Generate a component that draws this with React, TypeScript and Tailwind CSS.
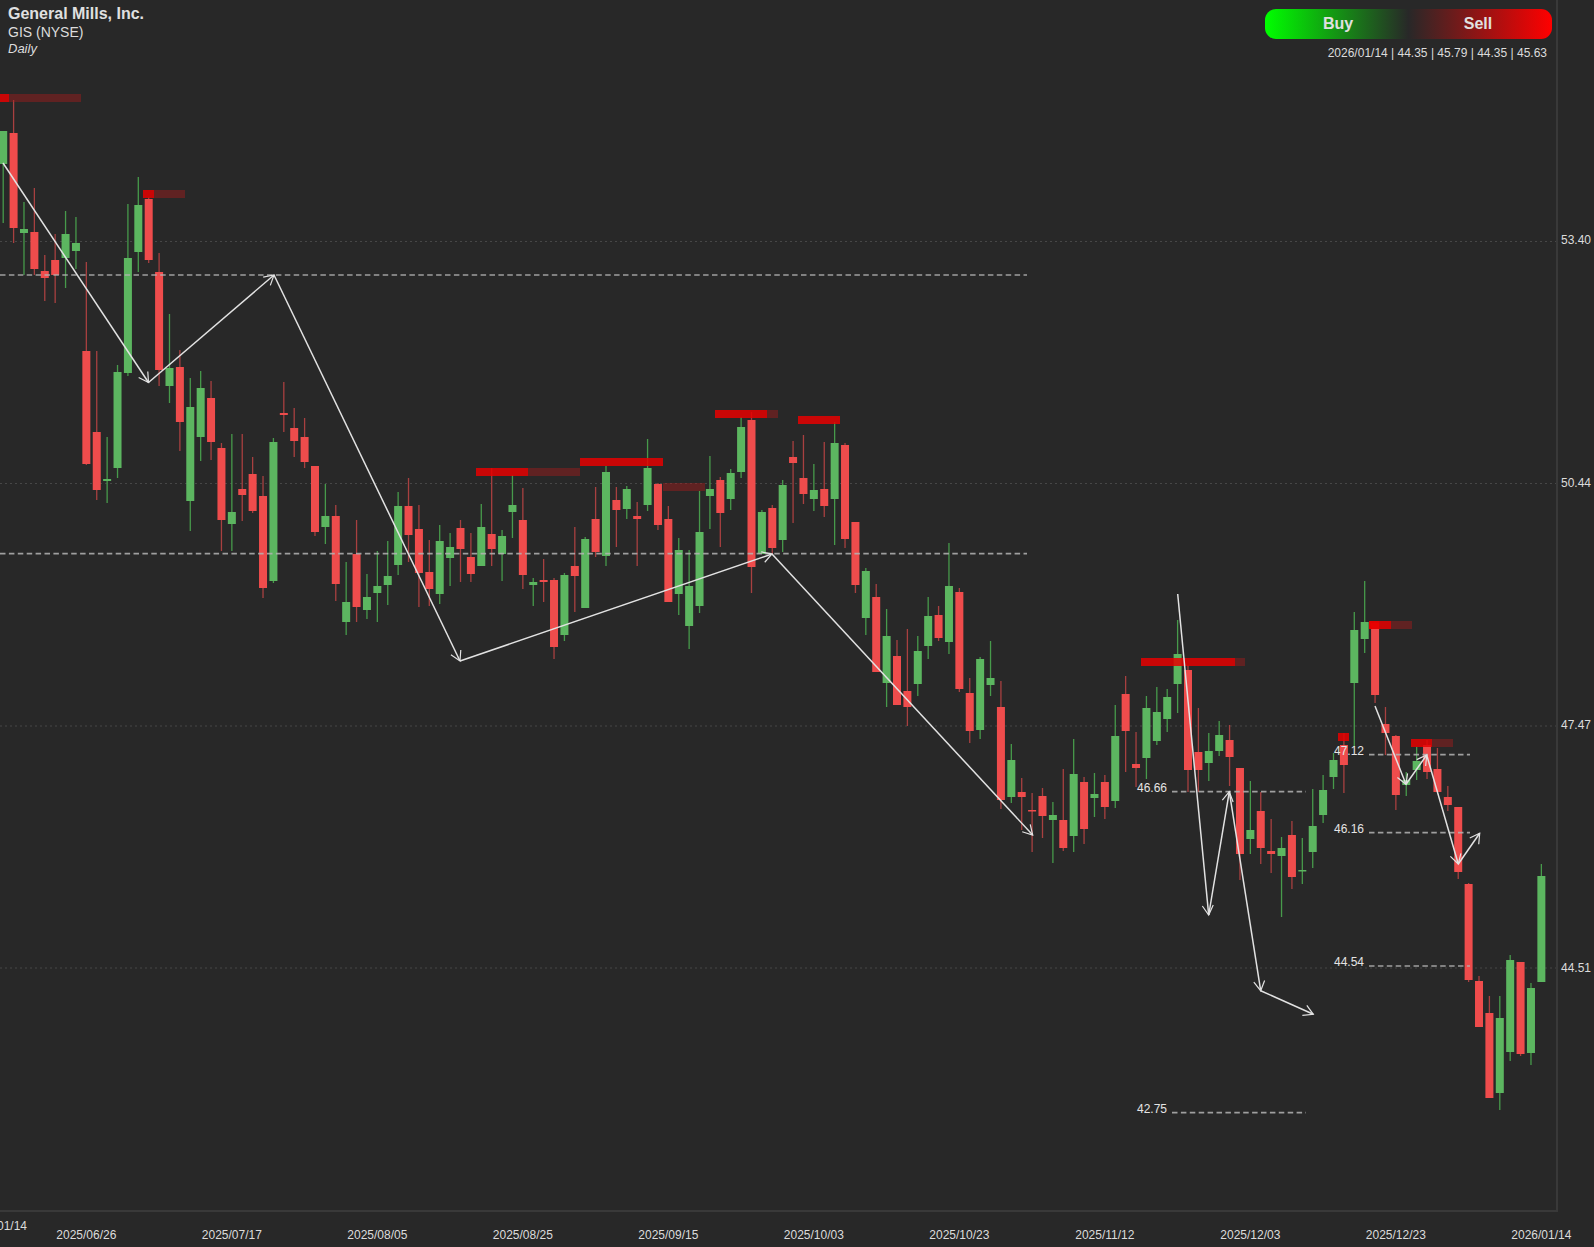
// candle: [up, wick top, body top, body bottom, wick bottom], all in chart pixels
type Candle = [0 | 1, number, number, number, number];

const candles: Candle[] = [
  [1, 131, 131, 164, 223], [0, 100, 133, 228, 243], [1, 202, 229, 233, 275], [0, 188, 232, 269, 275],
  [0, 255, 271, 278, 301], [0, 234, 260, 275, 303], [1, 211, 234, 258, 288], [1, 217, 243, 251, 269],
  [0, 262, 351, 464, 465], [0, 351, 432, 490, 500], [1, 437, 479, 481, 503], [1, 365, 372, 468, 478],
  [1, 204, 258, 373, 376], [1, 177, 205, 252, 272], [0, 197, 199, 260, 263], [0, 253, 272, 370, 386],
  [1, 314, 368, 386, 403], [0, 350, 367, 422, 451], [1, 378, 407, 501, 531], [1, 371, 388, 437, 461],
  [0, 381, 398, 442, 460], [0, 443, 448, 520, 551], [1, 434, 512, 524, 551], [0, 434, 489, 495, 521],
  [0, 457, 474, 511, 513], [0, 476, 496, 588, 598], [1, 438, 442, 581, 583], [0, 382, 413, 415, 432],
  [0, 408, 428, 441, 457], [0, 418, 437, 462, 468], [0, 466, 466, 532, 536], [1, 484, 516, 527, 544],
  [0, 505, 516, 584, 601], [1, 562, 602, 622, 635], [0, 520, 554, 607, 622], [1, 574, 597, 610, 619],
  [1, 551, 586, 593, 622], [1, 541, 576, 585, 605], [1, 492, 506, 565, 575], [0, 478, 506, 535, 562],
  [0, 505, 529, 573, 607], [0, 540, 572, 589, 606], [1, 525, 541, 594, 604], [1, 533, 547, 558, 586],
  [0, 520, 528, 549, 582], [0, 533, 557, 574, 582], [1, 504, 527, 566, 566], [0, 468, 534, 549, 566],
  [1, 530, 536, 554, 581], [1, 475, 505, 512, 538], [0, 488, 520, 575, 589], [1, 578, 582, 585, 606],
  [0, 559, 580, 582, 602], [0, 578, 580, 647, 659], [1, 573, 575, 635, 641], [0, 527, 566, 576, 612],
  [1, 537, 539, 608, 608], [0, 487, 519, 552, 557], [1, 466, 472, 556, 566], [0, 487, 500, 510, 547],
  [1, 486, 489, 509, 519], [0, 502, 516, 519, 566], [1, 439, 468, 505, 511], [0, 483, 484, 525, 530],
  [0, 506, 519, 602, 602], [1, 538, 550, 594, 615], [1, 550, 586, 626, 649], [1, 491, 532, 606, 613],
  [1, 456, 489, 496, 529], [0, 477, 480, 513, 547], [1, 469, 473, 499, 510], [1, 417, 427, 472, 478],
  [0, 412, 420, 567, 593], [1, 510, 512, 554, 554], [0, 505, 508, 548, 554], [1, 480, 485, 540, 552],
  [0, 441, 457, 463, 523], [0, 435, 478, 494, 504], [1, 464, 490, 499, 511], [0, 442, 489, 506, 517],
  [1, 422, 443, 499, 545], [0, 443, 445, 539, 548], [0, 522, 522, 585, 593], [1, 568, 571, 618, 635],
  [0, 584, 597, 672, 672], [1, 609, 636, 683, 707], [0, 640, 656, 705, 705], [0, 629, 691, 707, 726],
  [1, 636, 651, 684, 696], [1, 597, 616, 646, 659], [0, 606, 615, 638, 641], [1, 543, 586, 642, 654],
  [0, 588, 592, 689, 692], [0, 678, 693, 731, 743], [1, 657, 659, 730, 739], [1, 641, 678, 685, 696],
  [0, 681, 707, 800, 809], [1, 744, 760, 797, 803], [0, 778, 792, 797, 830], [0, 793, 810, 811, 852],
  [0, 788, 796, 816, 838], [1, 802, 815, 820, 863], [0, 769, 820, 848, 851], [1, 739, 774, 836, 852],
  [0, 777, 782, 829, 844], [1, 773, 794, 798, 817], [0, 775, 782, 807, 819], [1, 705, 736, 801, 808],
  [0, 676, 694, 731, 772], [0, 732, 764, 768, 787], [1, 696, 708, 758, 779], [1, 687, 712, 741, 745],
  [1, 689, 697, 719, 732], [1, 620, 654, 684, 713], [0, 665, 670, 770, 792], [0, 708, 752, 770, 792],
  [1, 733, 751, 763, 781], [1, 721, 735, 751, 756], [0, 725, 740, 757, 786], [0, 768, 768, 854, 880],
  [1, 781, 830, 839, 854], [0, 792, 811, 848, 864], [0, 819, 851, 854, 873], [1, 837, 848, 856, 917],
  [0, 821, 835, 877, 889], [1, 838, 870, 871, 884], [1, 789, 826, 852, 868], [1, 775, 790, 815, 823],
  [1, 753, 760, 777, 789], [0, 733, 745, 765, 793], [1, 612, 630, 683, 747], [1, 581, 622, 639, 653],
  [0, 622, 623, 695, 703], [0, 707, 724, 733, 755], [0, 735, 736, 795, 810], [1, 772, 780, 785, 796],
  [1, 747, 761, 770, 780], [0, 740, 745, 772, 779], [0, 748, 769, 792, 792], [0, 786, 797, 805, 811],
  [0, 807, 807, 872, 879], [0, 883, 884, 980, 982], [0, 976, 981, 1027, 1027], [0, 996, 1013, 1098, 1098],
  [1, 996, 1018, 1093, 1110], [1, 955, 960, 1052, 1061], [0, 962, 962, 1054, 1056], [1, 983, 988, 1053, 1065],
  [1, 864, 876, 982, 982],
];

const candleX = (i: number) => 3.2 + i * 10.393;

// [x0, x1, y, bright]
const zones: [number, number, number, boolean][] = [
  [0, 9, 94, true], [9, 81, 94, false],
  [143, 154, 190, true], [154, 185, 190, false],
  [476, 528, 468, true], [528, 580, 468, false],
  [580, 663, 458, true],
  [663, 705, 483, false],
  [715, 767, 410, true], [767, 778, 410, false],
  [798, 840, 416, true],
  [1141, 1235, 658, true], [1235, 1245, 658, false],
  [1338, 1349, 733, true],
  [1369, 1379, 621, true], [1369, 1391, 621, true], [1391, 1412, 621, false],
  [1411, 1432, 739, true], [1432, 1453, 739, false],
];

const levels = [
  { x0: 0, x1: 1027, y: 275 },
  { x0: 0, x1: 1027, y: 553.7 },
  { x0: 1172, x1: 1306, y: 791.7, label: '46.66', lx: 1137, ly: 788 },
  { x0: 1172, x1: 1306, y: 1112.7, label: '42.75', lx: 1137, ly: 1109 },
  { x0: 1369, x1: 1470, y: 754.7, label: '47.12', lx: 1334, ly: 751.7 },
  { x0: 1369, x1: 1470, y: 832.7, label: '46.16', lx: 1334, ly: 829 },
  { x0: 1369, x1: 1470, y: 966, label: '44.54', lx: 1334, ly: 962 },
];

const zigzags: [number, number][][] = [
  [[3, 163], [148.5, 382.5], [274, 275], [460, 661], [772, 554], [1032.7, 835]],
  [[1177.7, 594], [1208.7, 915], [1229.3, 791.7], [1260.7, 990.7], [1313.3, 1014.3]],
  [[1375, 706], [1406, 784.3], [1426.7, 755], [1458.3, 864], [1479.7, 833.3]],
];

const priceTicks = [
  { y: 241.5, ly: 239, text: '53.40' },
  { y: 483.5, ly: 482, text: '50.44' },
  { y: 726, ly: 724, text: '47.47' },
  { y: 968, ly: 967, text: '44.51' },
];

const dates = [
  [8, '2025/06/26'], [22, '2025/07/17'], [36, '2025/08/05'], [50, '2025/08/25'], [64, '2025/09/15'],
  [78, '2025/10/03'], [92, '2025/10/23'], [106, '2025/11/12'], [120, '2025/12/03'], [134, '2025/12/23'],
  [148, '2026/01/14'],
] as const;

function arrowHead(a: [number, number], b: [number, number]) {
  const ang = Math.atan2(b[1] - a[1], b[0] - a[0]);
  const len = 11;
  const spread = 0.52;
  const p1 = [b[0] - len * Math.cos(ang - spread), b[1] - len * Math.sin(ang - spread)];
  const p2 = [b[0] - len * Math.cos(ang + spread), b[1] - len * Math.sin(ang + spread)];
  return `M${p1[0]} ${p1[1]}L${b[0]} ${b[1]}L${p2[0]} ${p2[1]}`;
}

function Chart() {
  return (
    <svg width="1594" height="1247" className="block font-['Liberation_Sans',Arial,sans-serif] text-[12px]">
      {priceTicks.map((t) => (
        <line key={t.y} x1="0" x2="1557" y1={t.y} y2={t.y} stroke="#474747" strokeWidth="1" strokeDasharray="2 3" />
      ))}

      <rect x="1556" y="0" width="2" height="1212" fill="#393939" />
      <rect x="0" y="1210" width="1558" height="2" fill="#393939" />

      {candles.map(([up, top, open, close, bottom], i) => {
        const x = candleX(i);
        return (
          <g key={i}>
            <line
              x1={x}
              x2={x}
              y1={top}
              y2={bottom}
              stroke={up ? '#479a4b' : '#a84040'}
              strokeWidth="1.3"
            />
            <rect
              x={x - 4}
              y={open}
              width="8"
              height={Math.max(close - open, 1.5)}
              fill={up ? '#5cb660' : '#ef4c4c'}
            />
          </g>
        );
      })}

      {zones.map(([x0, x1, y, bright], i) => (
        <rect
          key={i}
          x={x0}
          y={y}
          width={x1 - x0}
          height="8"
          fill={bright ? '#e60000' : '#ad1a1a'}
          fillOpacity={bright ? 0.85 : 0.42}
        />
      ))}

      {levels.map((l) => (
        <g key={l.y}>
          <line x1={l.x0} x2={l.x1} y1={l.y} y2={l.y} stroke="#b4b4b4" strokeOpacity="0.85" strokeWidth="1.7" strokeDasharray="5.5 3.4" />
          {l.label && (
            <text x={l.lx} y={l.ly + 3.5} fill="#e4e4e4">
              {l.label}
            </text>
          )}
        </g>
      ))}

      {zigzags.map((pts, i) => (
        <g key={i} fill="none" stroke="#e2e2e2" strokeWidth="1.5">
          {pts.slice(1).map((p, j) => (
            <g key={j}>
              <line x1={pts[j][0]} y1={pts[j][1]} x2={p[0]} y2={p[1]} />
              <path d={arrowHead(pts[j], p)} strokeWidth="1.2" />
            </g>
          ))}
        </g>
      ))}

      {priceTicks.map((t) => (
        <text key={t.text} x="1561" y={t.ly + 4.5} fill="#dcdcdc">
          {t.text}
        </text>
      ))}

      <text x="27" y="1229.5" textAnchor="end" fill="#dcdcdc">
        2025/01/14
      </text>
      {dates.map(([i, label]) => (
        <text key={label} x={candleX(i)} y="1238.5" textAnchor="middle" fill="#dcdcdc">
          {label}
        </text>
      ))}
    </svg>
  );
}

export default function App() {
  return (
    <div className="relative w-[1594px] h-[1247px] overflow-hidden bg-[#282828] text-[#dcdcdc] font-['Liberation_Sans',Arial,sans-serif]">
      <Chart />

      {/* symbol title */}
      <div className="absolute left-2 top-[5px]">
        <div className="text-[16px] leading-[18px] font-bold text-[#e0e0e0]">General Mills, Inc.</div>
        <div className="text-[14px] leading-[18px]">GIS (NYSE)</div>
        <div className="text-[13px] leading-[15px] italic">Daily</div>
      </div>

      {/* order buttons + ohlc */}
      <div className="absolute left-[1265px] top-[9px] w-[287px]">
        <div className="flex h-[30px] rounded-[11px] overflow-hidden text-[16px] font-bold text-[#e0e0e0] bg-linear-to-r/srgb from-[#00ff00] via-[#282828] to-[#ff0000]">
          <div className="flex-1 flex items-center justify-center pl-[3px]">Buy</div>
          <div className="flex-1 flex items-center justify-center pr-[4px]">Sell</div>
        </div>
        <div className="mt-[6px] pr-[5px] text-right text-[12px] leading-[16px]">
          2026/01/14 | 44.35 | 45.79 | 44.35 | 45.63
        </div>
      </div>
    </div>
  );
}
